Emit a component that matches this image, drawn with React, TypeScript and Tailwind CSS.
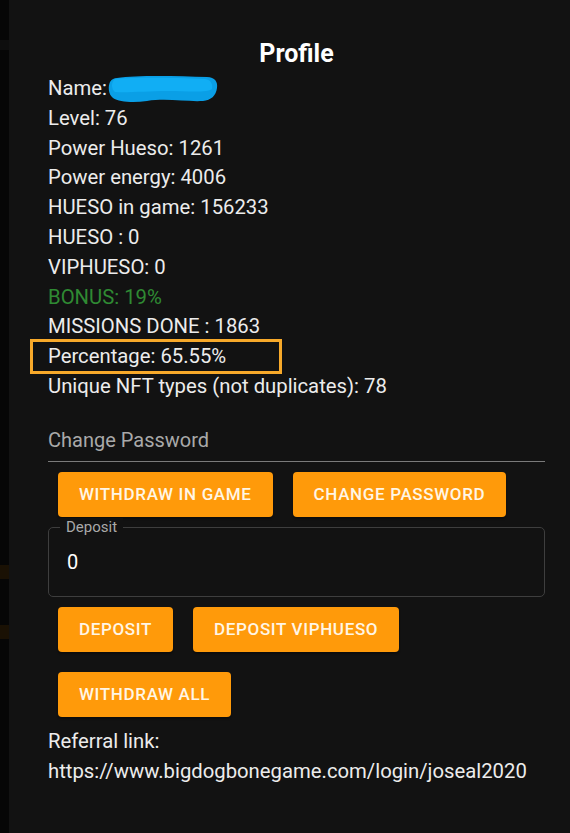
import React from "react";

const stats = [
  "Level: 76",
  "Power Hueso: 1261",
  "Power energy: 4006",
  "HUESO in game: 156233",
  "HUESO : 0",
  "VIPHUESO: 0",
];

function OrangeButton({ label }: { label: string }) {
  return (
    <button className="m-[10px] h-[45px] rounded-[4px] bg-[#ff9a0a] px-[21px] text-[17px] font-medium uppercase tracking-[0.65px] text-[#fff6e6] shadow-[0_2px_2px_rgba(0,0,0,0.35)]">
      {label}
    </button>
  );
}

function Scribble() {
  return (
    <svg width="112" height="30" viewBox="0 0 112 30" className="inline-block align-middle -mt-[2px]">
      <path
        d="M10 4 C30 1 70 2 100 3 C108 3 111 8 110 14 C109 22 104 26 96 27 C80 28 60 24 40 27 C26 29 12 28 6 24 C1 20 1 12 3 8 C5 5 7 4 10 4 Z"
        fill="#0a9fe6"
      />
      <path
        d="M8 5 C30 3 70 4 98 5 C104 6 106 10 105 15 C100 19 80 17 60 17 C40 17 20 19 8 18 C4 15 4 8 8 5 Z"
        fill="#11aef4"
      />
    </svg>
  );
}

export default function App() {
  return (
    <main
      className="flex min-h-[833px] w-full bg-[#121212] text-[#ececec]"
      style={{ fontFamily: "Roboto, 'Open Sans', sans-serif" }}
    >
      {/* backdrop sliver */}
      <div className="flex w-[9px] shrink-0 flex-col bg-[#060606]">
        <div className="mt-[40px] h-[10px] w-full bg-[#0e0e0e]" />
        <div className="mt-[515px] h-[14px] w-full bg-[#1a1104]" />
        <div className="mt-[46px] h-[14px] w-full bg-[#1a1104]" />
      </div>

      <div className="flex-1 pl-[39px] pr-[25px] pt-[38px]">
        <h2 className="text-center text-[25px] font-bold leading-[32px] text-white">Profile</h2>

        <div className="mt-[4px] text-[20.3px] leading-[29.8px]">
          <p>
            Name:
            <Scribble />
          </p>
          {stats.map((s) => (
            <p key={s}>{s}</p>
          ))}
          <p className="text-[#2f8a33]">BONUS: 19%</p>
          <p>MISSIONS DONE : 1863</p>
          <p className="relative">
            Percentage: 65.55%
            <span className="absolute -left-[18px] -top-[3px] h-[35px] w-[252px] border-[3px] border-[#f7a92a]" />
          </p>
          <p>Unique NFT types (not duplicates): 78</p>
        </div>

        {/* change password field */}
        <div className="mt-[25px] border-b border-[#7a7a7a] pb-[8px] text-[20px] leading-[26px] text-[#a9a9a9]">
          Change Password
        </div>

        <div className="flex flex-wrap">
          <OrangeButton label="Withdraw in game" />
          <OrangeButton label="Change password" />
        </div>

        <div className="relative h-[70px] rounded-[5px] border border-[#3e3e3e]">
          <span className="absolute -top-[10px] left-[11px] bg-[#121212] px-[6px] text-[15px] leading-[18px] text-[#a9a9a9]">
            Deposit
          </span>
          <div className="flex h-full items-center pl-[18px] text-[20px] text-white">0</div>
        </div>

        <div className="flex flex-wrap">
          <OrangeButton label="Deposit" />
          <OrangeButton label="Deposit viphueso" />
        </div>
        <div className="flex">
          <OrangeButton label="Withdraw all" />
        </div>

        <div className="text-[20.3px] leading-[29.8px]">
          <p>Referral link:</p>
          <p>https://www.bigdogbonegame.com/login/joseal2020</p>
        </div>
      </div>
    </main>
  );
}
